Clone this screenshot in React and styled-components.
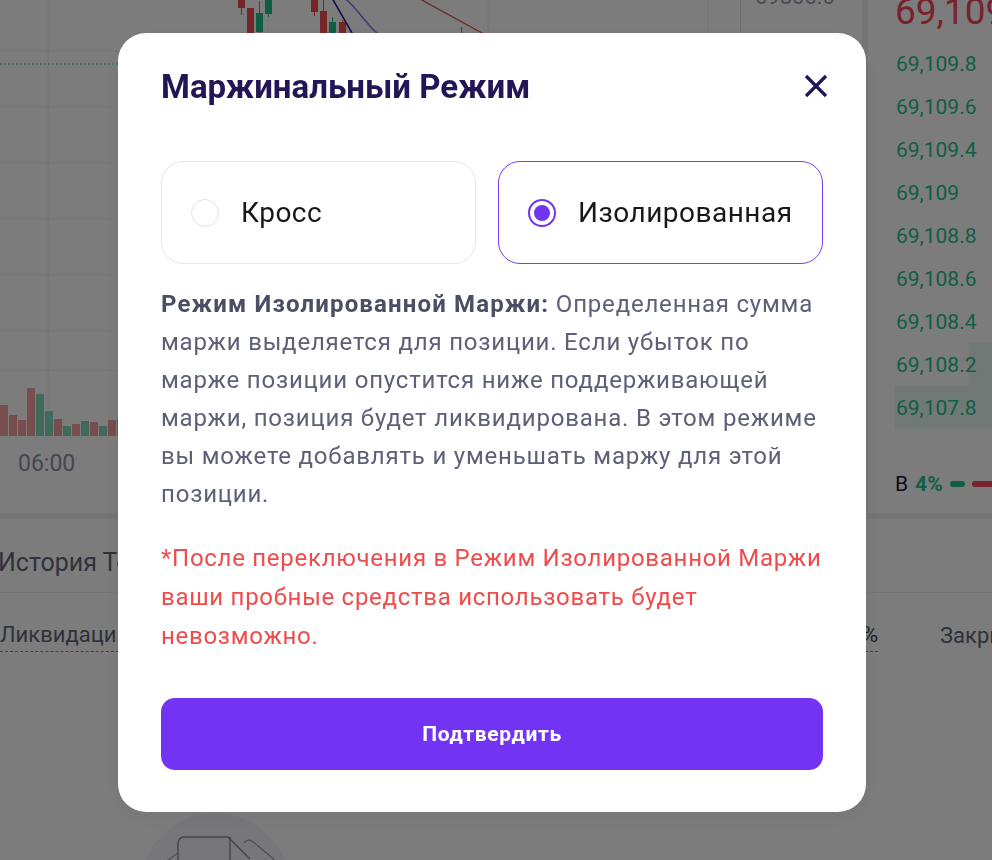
import React from "react";
import styled, { createGlobalStyle } from "styled-components";

const GlobalStyle = createGlobalStyle`
  html, body { margin: 0; padding: 0; }
  body {
    font-family: Roboto, "Noto Sans", sans-serif;
    background: #eceef2;
    overflow: hidden;
  }
  * { box-sizing: border-box; }
`;

/* ---------- trading page behind the dialog ---------- */

const Page = styled.div`
  width: 992px;
  height: 860px;
  display: flex;
  flex-direction: column;
  gap: 6px;
  background: #eceef2;
  overflow: hidden;
`;

const TopRow = styled.div`
  display: flex;
  gap: 6px;
  height: 513px;
  flex: none;
`;

const ChartPanel = styled.section`
  flex: 1;
  min-width: 0;
  display: flex;
  background: #fff;
`;

const ChartArea = styled.div`
  width: 740px;
  flex: none;
  display: flex;
  flex-direction: column;
`;

const ChartCanvas = styled.svg`
  display: block;
  flex: none;
`;

const TimeAxis = styled.div`
  height: 73px;
  padding: 12px 0 0 18px;
  font-size: 23px;
  line-height: 24px;
  color: #8f93a7;
`;

const PriceAxis = styled.div`
  flex: 1;
  border-left: 1px solid #e4e6ea;
  padding-left: 14px;
  overflow: hidden;
`;

const AxisLabel = styled.div`
  margin-top: -14px;
  font-size: 22px;
  line-height: 22px;
  color: #9a9eb0;
`;

const OrderBook = styled.aside`
  width: 124px;
  flex: none;
  background: #fff;
  display: flex;
  flex-direction: column;
  padding-left: 27px;
  overflow: hidden;
`;

const LastPrice = styled.div`
  height: 48px;
  flex: none;
  margin-top: -6px;
  font-size: 37px;
  line-height: 36px;
  color: #f6465d;
  white-space: nowrap;
`;

const BookRow = styled.div`
  height: 43px;
  flex: none;
  display: flex;
  align-items: center;
  padding-left: 1px;
  font-size: 21px;
  color: #25c28c;
  white-space: nowrap;
  background: linear-gradient(
    to left,
    rgba(37, 194, 140, 0.12) ${(p) => p.$depth}%,
    transparent ${(p) => p.$depth}%
  );
`;

const Ratio = styled.div`
  margin-top: 39px;
  height: 32px;
  flex: none;
  display: flex;
  align-items: center;
  gap: 7px;
  font-size: 21px;
  white-space: nowrap;
`;

const RatioSide = styled.span`
  color: #1c1840;
`;

const RatioValue = styled.span`
  color: #25c28c;
  font-weight: 700;
`;

const RatioBar = styled.span`
  height: 6px;
  border-radius: 3px;
  flex: none;
  width: ${(p) => p.$w}px;
  background: ${(p) => p.$color};
`;

const HistoryPanel = styled.section`
  flex: 1;
  background: #fff;
  display: flex;
  flex-direction: column;
`;

const HistoryHeader = styled.div`
  height: 74px;
  flex: none;
  display: flex;
  align-items: center;
  padding-top: 14px;
  margin-left: -2px;
  border-bottom: 1px solid #eceef2;
  font-size: 25px;
  color: #626779;
  white-space: nowrap;
`;

const ColumnsRow = styled.div`
  height: 72px;
  flex: none;
  display: grid;
  grid-template-columns: 1fr auto 52px;
  column-gap: 62px;
  align-items: center;
  padding-top: 16px;
  font-size: 22px;
  color: #626779;
  white-space: nowrap;
`;

const ColumnHead = styled.span`
  justify-self: start;
  border-bottom: ${(p) => (p.$dashed ? "1.5px dashed #8d91a3" : "none")};
  padding-bottom: 4px;
  color: ${(p) => (p.$strong ? "#40445a" : "inherit")};
`;

const EmptyState = styled.div`
  padding: 148px 0 0 140px;
`;

/* ---------- dialog ---------- */

const Overlay = styled.div`
  position: fixed;
  inset: 0;
  background: rgba(0, 0, 0, 0.515);
  display: flex;
  align-items: flex-start;
  padding: 33px 0 0 118px;
`;

const Dialog = styled.div`
  width: 748px;
  background: #fff;
  border-radius: 28px;
  padding: 33px 43px 42px;
  display: flex;
  flex-direction: column;
  box-shadow: 0 6px 24px rgba(0, 0, 0, 0.06);
`;

const DialogHeader = styled.header`
  height: 40px;
  display: flex;
  align-items: center;
  justify-content: space-between;
`;

const Title = styled.h2`
  margin: 0;
  font-family: Roboto, sans-serif;
  font-weight: 700;
  font-size: 33px;
  color: #231656;
`;

const CloseButton = styled.button`
  width: 24px;
  height: 24px;
  padding: 0;
  margin-right: -5px;
  border: 0;
  background: none;
  color: #231656;
  display: grid;
  place-items: center;
  cursor: pointer;
`;

const ModeGrid = styled.div`
  margin-top: 55px;
  display: grid;
  grid-template-columns: 315fr 325fr;
  gap: 22px;
`;

const ModeCard = styled.button`
  height: 103px;
  display: flex;
  align-items: center;
  gap: 22px;
  padding: 0 0 0 29px;
  border: 1px solid ${(p) => (p.$active ? "#7a3cf3" : "#e4e4e9")};
  border-radius: 22px;
  background: #fff;
  font-family: Roboto, sans-serif;
  font-size: 28px;
  letter-spacing: 0.5px;
  color: #17171f;
  cursor: pointer;
`;

const RadioMark = styled.span`
  width: 28px;
  height: 28px;
  flex: none;
  border-radius: 50%;
  border: ${(p) => (p.$active ? "2px solid #7234f2" : "1px solid #e3e3e8")};
  display: grid;
  place-items: center;

  &::after {
    content: "";
    width: 16px;
    height: 16px;
    border-radius: 50%;
    background: ${(p) => (p.$active ? "#7234f2" : "transparent")};
  }
`;

const Description = styled.p`
  margin: 21px 0 0;
  font-size: 24px;
  line-height: 38px;
  letter-spacing: 0.8px;
  color: #5d6177;

  strong {
    font-weight: 700;
    letter-spacing: 1.15px;
    color: #4b4f64;
  }
`;

const Notice = styled.p`
  margin: 26px 0 0;
  font-size: 24px;
  line-height: 39px;
  letter-spacing: 0.72px;
  color: #f04b4b;
`;

const ConfirmButton = styled.button`
  margin-top: 42px;
  height: 72px;
  border: 0;
  border-radius: 14px;
  background: #7234f2;
  color: #fff;
  font-family: Roboto, sans-serif;
  font-size: 21px;
  font-weight: 700;
  letter-spacing: 0.7px;
  cursor: pointer;
`;

/* ---------- data ---------- */

const candles = [
  { x: 238, o: -6, c: 8, h: -6, l: 15, up: false },
  { x: 247, o: 8, c: 60, h: 8, l: 64, up: false },
  { x: 256, o: 32, c: 13, h: 1, l: 36, up: true },
  { x: 265, o: 14, c: -6, h: -6, l: 17, up: true },
  { x: 311, o: -6, c: 12, h: -6, l: 16, up: false },
  { x: 320, o: 11, c: 58, h: 0, l: 62, up: false },
  { x: 329, o: 44, c: 22, h: 17, l: 48, up: true },
  { x: 339, o: 22, c: 52, h: 20, l: 56, up: false },
  { x: 458, o: 50, c: 40, h: 27, l: 54, up: true },
];

const volume = [
  [0, 405, false], [9, 415, false], [18, 420, false], [27, 388, false],
  [36, 394, true], [45, 411, true], [54, 419, false], [63, 426, true],
  [72, 424, false], [81, 421, true], [90, 422, false], [99, 426, true],
  [108, 420, false], [117, 418, true],
];

const book = [
  ["69,109.8", 0], ["69,109.6", 0], ["69,109.4", 0], ["69,109", 0],
  ["69,108.8", 0], ["69,108.6", 0], ["69,108.4", 0], ["69,108.2", 24],
  ["69,107.8", 100],
];

const RED = "#ef4f50";
const GREEN = "#1fbf88";

function Chart() {
  const hLines = [51, 107, 163, 219, 275, 331, 370];
  const vLines = [48, 268, 488, 708];
  return (
    <ChartCanvas width="740" height="440" viewBox="0 0 740 440">
      {hLines.map((y) => (
        <line key={y} x1="0" x2="740" y1={y} y2={y} stroke="#eef0f3" strokeWidth="1" />
      ))}
      {vLines.map((x) => (
        <line key={x} x1={x} x2={x} y1="0" y2="440" stroke="#eef0f3" strokeWidth="1" />
      ))}
      <line x1="0" x2="740" y1="64" y2="64" stroke={GREEN} strokeWidth="1.2" strokeDasharray="1.5 2.5" />
      {candles.map((k) => {
        const top = Math.min(k.o, k.c);
        const color = k.up ? GREEN : RED;
        return (
          <g key={k.x}>
            <line x1={k.x + 3.5} x2={k.x + 3.5} y1={k.h} y2={k.l} stroke={color} strokeWidth="1" />
            <rect x={k.x} y={top} width="7" height={Math.abs(k.o - k.c)} fill={color} />
          </g>
        );
      })}
      <path d="M332 -2 L352 33 L372 66" fill="none" stroke="#2c1c96" strokeWidth="1.6" />
      <path d="M344 -2 C356 6 364 22 377 33 S398 52 410 60" fill="none" stroke="#8d7af2" strokeWidth="1.6" />
      <path d="M420 -1 L482 33 L530 60" fill="none" stroke="#e25656" strokeWidth="1.4" />
      {volume.map(([x, top, up]) => (
        <rect
          key={x}
          x={x}
          y={top}
          width="8"
          height={436 - top}
          fill={up ? GREEN : RED}
          opacity="0.55"
        />
      ))}
    </ChartCanvas>
  );
}

function EmptyIllustration() {
  return (
    <svg width="150" height="150" viewBox="0 0 150 150">
      <circle cx="75" cy="75" r="75" fill="#f4f5f8" />
      <path
        d="M38 95 V30 a6 6 0 0 1 6 -6 H88 L110 46"
        fill="none"
        stroke="#8b90a4"
        strokeWidth="1.4"
      />
      <path d="M90 24 V120" stroke="#8b90a4" strokeWidth="1.4" />
      <path
        d="M104 30 a6 6 0 0 1 8 -2 L148 58"
        fill="none"
        stroke="#a3a8ba"
        strokeWidth="1.4"
      />
      <path d="M38 40 L10 60" stroke="#a3a8ba" strokeWidth="1.4" />
    </svg>
  );
}

function CloseIcon() {
  return (
    <svg width="24" height="24" viewBox="0 0 24 24">
      <path
        d="M2 2 L22 22 M22 2 L2 22"
        stroke="currentColor"
        strokeWidth="3.2"
        strokeLinecap="butt"
      />
    </svg>
  );
}

export default function App() {
  const [mode, setMode] = React.useState("isolated");
  const modes = [
    { id: "cross", label: "Кросс" },
    { id: "isolated", label: "Изолированная" },
  ];

  return (
    <>
      <GlobalStyle />
      <Page>
        <TopRow>
          <ChartPanel>
            <ChartArea>
              <Chart />
              <TimeAxis>06:00</TimeAxis>
            </ChartArea>
            <PriceAxis>
              <AxisLabel>69800.0</AxisLabel>
            </PriceAxis>
          </ChartPanel>
          <OrderBook>
            <LastPrice>69,109.8</LastPrice>
            {book.map(([price, depth]) => (
              <BookRow key={price} $depth={depth}>
                {price}
              </BookRow>
            ))}
            <Ratio>
              <RatioSide>В</RatioSide>
              <RatioValue>4%</RatioValue>
              <RatioBar $w={15} $color="#25c28c" />
              <RatioBar $w={60} $color="#f6465d" />
            </Ratio>
          </OrderBook>
        </TopRow>
        <HistoryPanel>
          <HistoryHeader>История Торговли</HistoryHeader>
          <ColumnsRow>
            <ColumnHead $dashed>Ликвидации</ColumnHead>
            <ColumnHead $dashed $strong>PnL / ROE %</ColumnHead>
            <ColumnHead>Закрыть</ColumnHead>
          </ColumnsRow>
          <EmptyState>
            <EmptyIllustration />
          </EmptyState>
        </HistoryPanel>
      </Page>

      <Overlay>
        <Dialog role="dialog" aria-modal="true">
          <DialogHeader>
            <Title>Маржинальный Режим</Title>
            <CloseButton aria-label="Закрыть">
              <CloseIcon />
            </CloseButton>
          </DialogHeader>

          <ModeGrid>
            {modes.map((m) => (
              <ModeCard
                key={m.id}
                $active={mode === m.id}
                onClick={() => setMode(m.id)}
              >
                <RadioMark $active={mode === m.id} />
                {m.label}
              </ModeCard>
            ))}
          </ModeGrid>

          <Description>
            <strong>Режим Изолированной Маржи:</strong> Определенная сумма
            маржи выделяется для позиции. Если убыток по марже позиции
            опустится ниже поддерживающей маржи, позиция будет ликвидирована.
            В этом режиме вы можете добавлять и уменьшать маржу для этой
            позиции.
          </Description>

          <Notice>
            *После переключения в Режим Изолированной Маржи ваши пробные
            средства использовать будет невозможно.
          </Notice>

          <ConfirmButton>Подтвердить</ConfirmButton>
        </Dialog>
      </Overlay>
    </>
  );
}
